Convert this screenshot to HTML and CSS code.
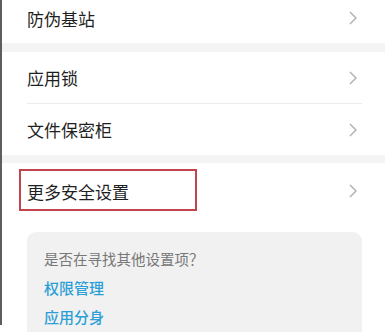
FILE: index.html
```html
<!DOCTYPE html>
<html lang="zh-CN">
<head>
<meta charset="utf-8">
<link rel="stylesheet" href="styles.css">
</head>
<body>
<div class="page">
  <section class="group first">
    <div class="row"><span class="label">防伪基站</span><svg class="chev" viewBox="0 0 8 14" width="8" height="14"><path d="M1 1 L7 7 L1 13" fill="none" stroke="#b3b3b3" stroke-width="1.5"/></svg></div>
  </section>
  <div class="band"></div>
  <section class="group">
    <div class="row"><span class="label">应用锁</span><svg class="chev" viewBox="0 0 8 14" width="8" height="14"><path d="M1 1 L7 7 L1 13" fill="none" stroke="#b3b3b3" stroke-width="1.5"/></svg></div>
    <div class="divider"></div>
    <div class="row"><span class="label">文件保密柜</span><svg class="chev" viewBox="0 0 8 14" width="8" height="14"><path d="M1 1 L7 7 L1 13" fill="none" stroke="#b3b3b3" stroke-width="1.5"/></svg></div>
  </section>
  <div class="band band2"></div>
  <section class="group last">
    <div class="row tall"><span class="label">更多安全设置</span><svg class="chev" viewBox="0 0 8 14" width="8" height="14"><path d="M1 1 L7 7 L1 13" fill="none" stroke="#b3b3b3" stroke-width="1.5"/></svg><div class="highlight"></div></div>
    <div class="card">
      <p class="hint">是否在寻找其他设置项？</p>
      <a class="link">权限管理</a>
      <a class="link">应用分身</a>
    </div>
  </section>
</div>
</body>
</html>
```
FILE: styles.css
```css
html, body {
  margin: 0;
  padding: 0;
  background: #ffffff;
}
body {
  width: 385px;
  height: 332px;
  overflow: hidden;
  font-family: "Noto Sans CJK SC", "Noto Sans", sans-serif;
}
.page {
  border-left: 2px solid #5e5e5e;
  height: 332px;
  box-sizing: border-box;
  background: #ffffff;
}
.group {
  background: #ffffff;
}
.first {
  margin-top: -7px;
}
.first .row {
  height: 50px;
}
.band {
  height: 9px;
  background: #f4f4f4;
}
.band2 {
  height: 8px;
}
.row {
  position: relative;
  height: 51px;
  display: flex;
  align-items: center;
  justify-content: space-between;
  padding: 0 28px 0 25px;
}
.row.tall {
  height: 56px;
}
.label {
  font-size: 17px;
  color: #1f1f1f;
  line-height: 1;
}
.chev {
  display: block;
}
.divider {
  height: 1px;
  background: #ececec;
  margin: 0 23px 0 25px;
}
.highlight {
  position: absolute;
  left: 17px;
  top: 6px;
  width: 174px;
  height: 38px;
  border: 2px solid #c3434e;
}
.card {
  margin: 13px 23px 0 25px;
  background: #f1f1f1;
  border-radius: 9px 9px 0 0;
  padding: 17px 17px 20px;
  display: flex;
  flex-direction: column;
  gap: 9px;
}
.hint {
  margin: 0;
  font-size: 14.5px;
  line-height: 20px;
  color: #777777;
}
.link {
  font-size: 15px;
  line-height: 20px;
  color: #2c9fd6;
  font-weight: 500;
}
```
